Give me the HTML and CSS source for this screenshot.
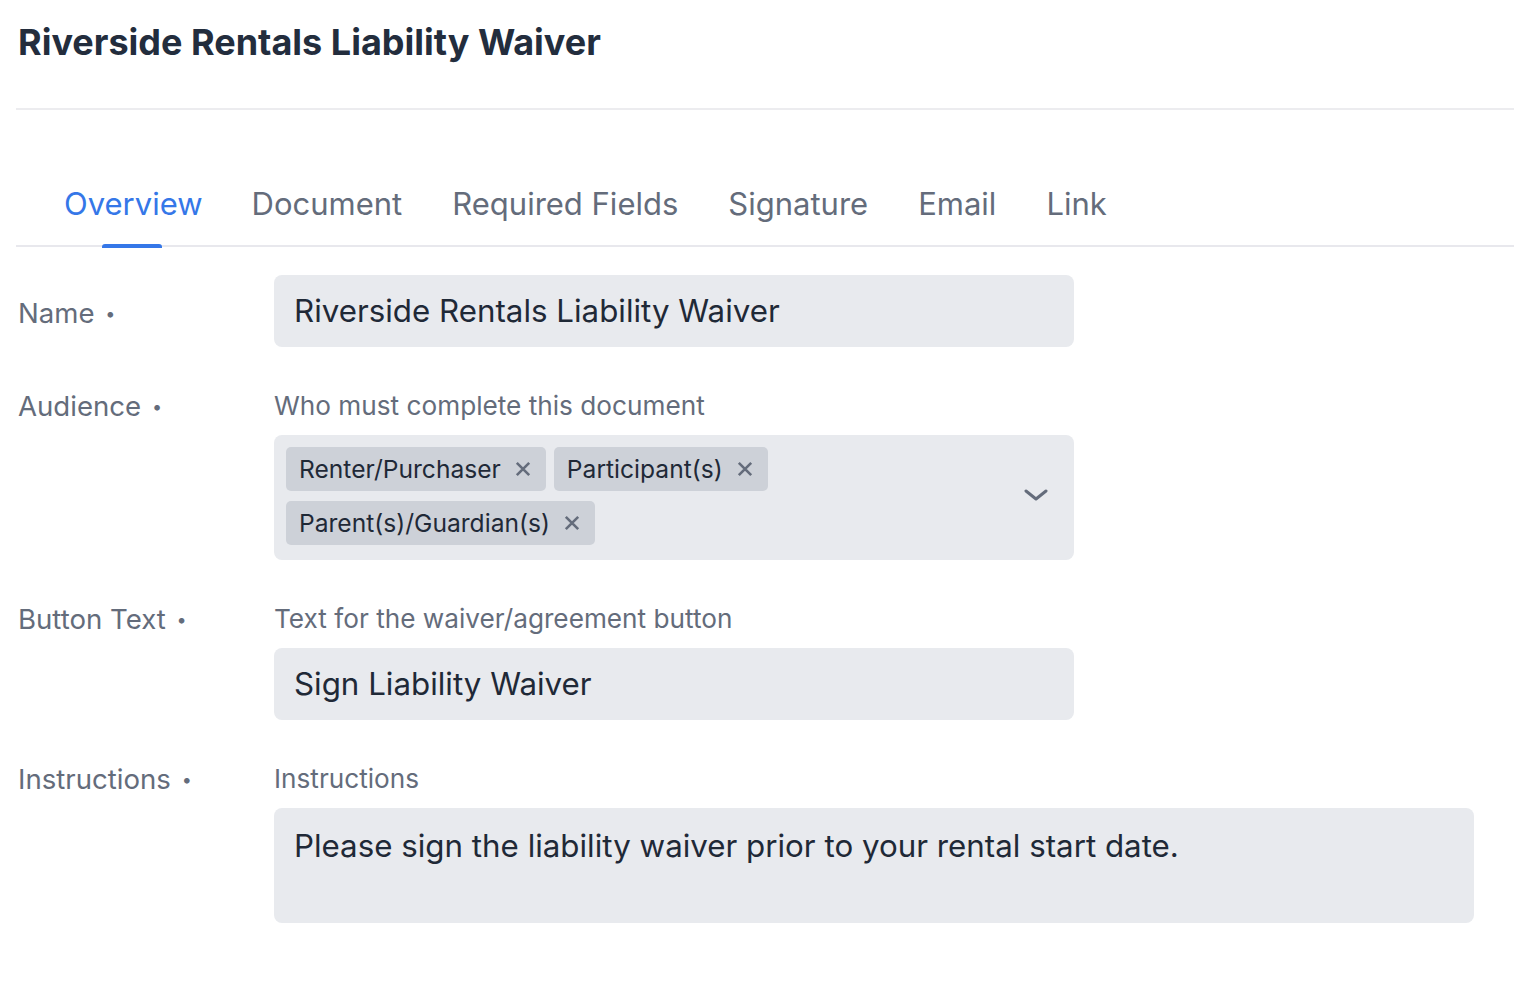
FILE: index.html
```html
<!DOCTYPE html>
<html lang="en">

<head>
    <meta charset="UTF-8">
    <meta name="viewport" content="width=device-width, initial-scale=1.0">
    <title>Riverside Rentals Liability Waiver</title>
    <link rel="stylesheet" href="styles.css">
</head>

<body>
    <div class="page">
        <!-- Header -->
        <div class="header">
            <h1 class="title">Riverside Rentals Liability Waiver</h1>
        </div>

        <!-- Tabs -->
        <div class="tabs">
            <div class="tab active">Overview</div>
            <div class="tab">Document</div>
            <div class="tab">Required Fields</div>
            <div class="tab">Signature</div>
            <div class="tab">Email</div>
            <div class="tab">Link</div>
        </div>

        <!-- Form -->
        <div class="form">
            <div class="row">
                <div class="label label-mid">Name <span class="dot">•</span></div>
                <div class="field">
                    <div class="input">Riverside Rentals Liability Waiver</div>
                </div>
            </div>

            <div class="row">
                <div class="label">Audience <span class="dot">•</span></div>
                <div class="field">
                    <div class="hint">Who must complete this document</div>
                    <div class="select">
                        <div class="chips">
                            <div class="chip">Renter/Purchaser
                                <svg class="chip-x" viewBox="0 0 16 16"><path d="M2.5 2.5l11 11M13.5 2.5l-11 11" /></svg>
                            </div>
                            <div class="chip">Participant(s)
                                <svg class="chip-x" viewBox="0 0 16 16"><path d="M2.5 2.5l11 11M13.5 2.5l-11 11" /></svg>
                            </div>
                            <div class="chip">Parent(s)/Guardian(s)
                                <svg class="chip-x" viewBox="0 0 16 16"><path d="M2.5 2.5l11 11M13.5 2.5l-11 11" /></svg>
                            </div>
                        </div>
                        <svg class="chevron" viewBox="0 0 24 24"><path d="M2 7l10 8 10-8" /></svg>
                    </div>
                </div>
            </div>

            <div class="row">
                <div class="label">Button Text <span class="dot">•</span></div>
                <div class="field">
                    <div class="hint">Text for the waiver/agreement button</div>
                    <div class="input">Sign Liability Waiver</div>
                </div>
            </div>

            <div class="row">
                <div class="label">Instructions <span class="dot">•</span></div>
                <div class="field">
                    <div class="hint">Instructions</div>
                    <div class="textarea">Please sign the liability waiver prior to your rental start date.</div>
                </div>
            </div>
        </div>
    </div>
</body>

</html>
```

FILE: styles.css
```css
/* General styles */
body {
    margin: 0;
    font-family: Inter, "Noto Sans", sans-serif;
    background: #fff;
    color: #1f2937;
}

.page {
    padding-left: 16px;
}

/* Header */
.header {
    padding: 20px 0 44px;
    border-bottom: 2px solid #ececef;
}

.title {
    margin: 0;
    font-size: 36px;
    line-height: 44px;
    font-weight: 700;
    color: #232d3d;
    padding-left: 2px;
}

/* Tabs */
.tabs {
    display: flex;
    padding-left: 24px;
    margin-top: 76px;
    border-bottom: 2px solid #e8e8ed;
}

.tab {
    position: relative;
    padding: 0 25px 23px;
    font-size: 31px;
    line-height: 36px;
    color: #646c7b;
}

.tab:first-child {
    padding-left: 24px;
    padding-right: 24px;
}

.tab.active {
    color: #3577e8;
}

.tab.active::after {
    content: "";
    position: absolute;
    left: 50%;
    bottom: -3px;
    width: 60px;
    height: 4px;
    margin-left: -31px;
    background: #3577e8;
    border-radius: 3px 3px 0 0;
}

/* Form */
.form {
    display: flex;
    flex-direction: column;
    gap: 41px;
    padding-top: 28px;
}

.row {
    display: grid;
    grid-template-columns: 258px 1fr;
}

.label {
    font-size: 27.6px;
    line-height: 36px;
    color: #646c7b;
    padding-left: 2px;
}

.label-mid {
    padding-top: 20px;
}

.dot {
    font-size: 18px;
    vertical-align: 3px;
    margin-left: 3px;
}

.field {
    display: flex;
    flex-direction: column;
    gap: 11px;
}

.hint {
    font-size: 26.2px;
    line-height: 36px;
    color: #646c7b;
}

.input {
    width: 800px;
    height: 72px;
    box-sizing: border-box;
    padding: 0 20px;
    display: flex;
    align-items: center;
    background: #e8eaee;
    border-radius: 8px;
    font-size: 31.3px;
    color: #1f2937;
}

.textarea {
    width: 1200px;
    height: 115px;
    box-sizing: border-box;
    padding: 20px 20px;
    background: #e8eaee;
    border-radius: 8px;
    font-size: 31.3px;
    line-height: 36px;
    color: #1f2937;
}

/* Multi select */
.select {
    width: 800px;
    box-sizing: border-box;
    padding: 12px 26px 15px 12px;
    display: flex;
    align-items: center;
    background: #e8eaee;
    border-radius: 8px;
}

.chips {
    display: flex;
    flex-wrap: wrap;
    gap: 10px 8px;
    max-width: 500px;
}

.chip {
    height: 44px;
    display: flex;
    align-items: center;
    gap: 13px;
    padding: 0 14px 0 13px;
    background: #cdd1d8;
    border-radius: 5px;
    font-size: 24.6px;
    color: #1f2937;
}

.chip-x {
    width: 18px;
    height: 18px;
    fill: none;
    stroke: #646c7b;
    stroke-width: 2.3;
}

.chevron {
    margin-left: auto;
    width: 24px;
    height: 24px;
    fill: none;
    stroke: #646c7b;
    stroke-width: 3;
    stroke-linecap: round;
    stroke-linejoin: round;
}
```
